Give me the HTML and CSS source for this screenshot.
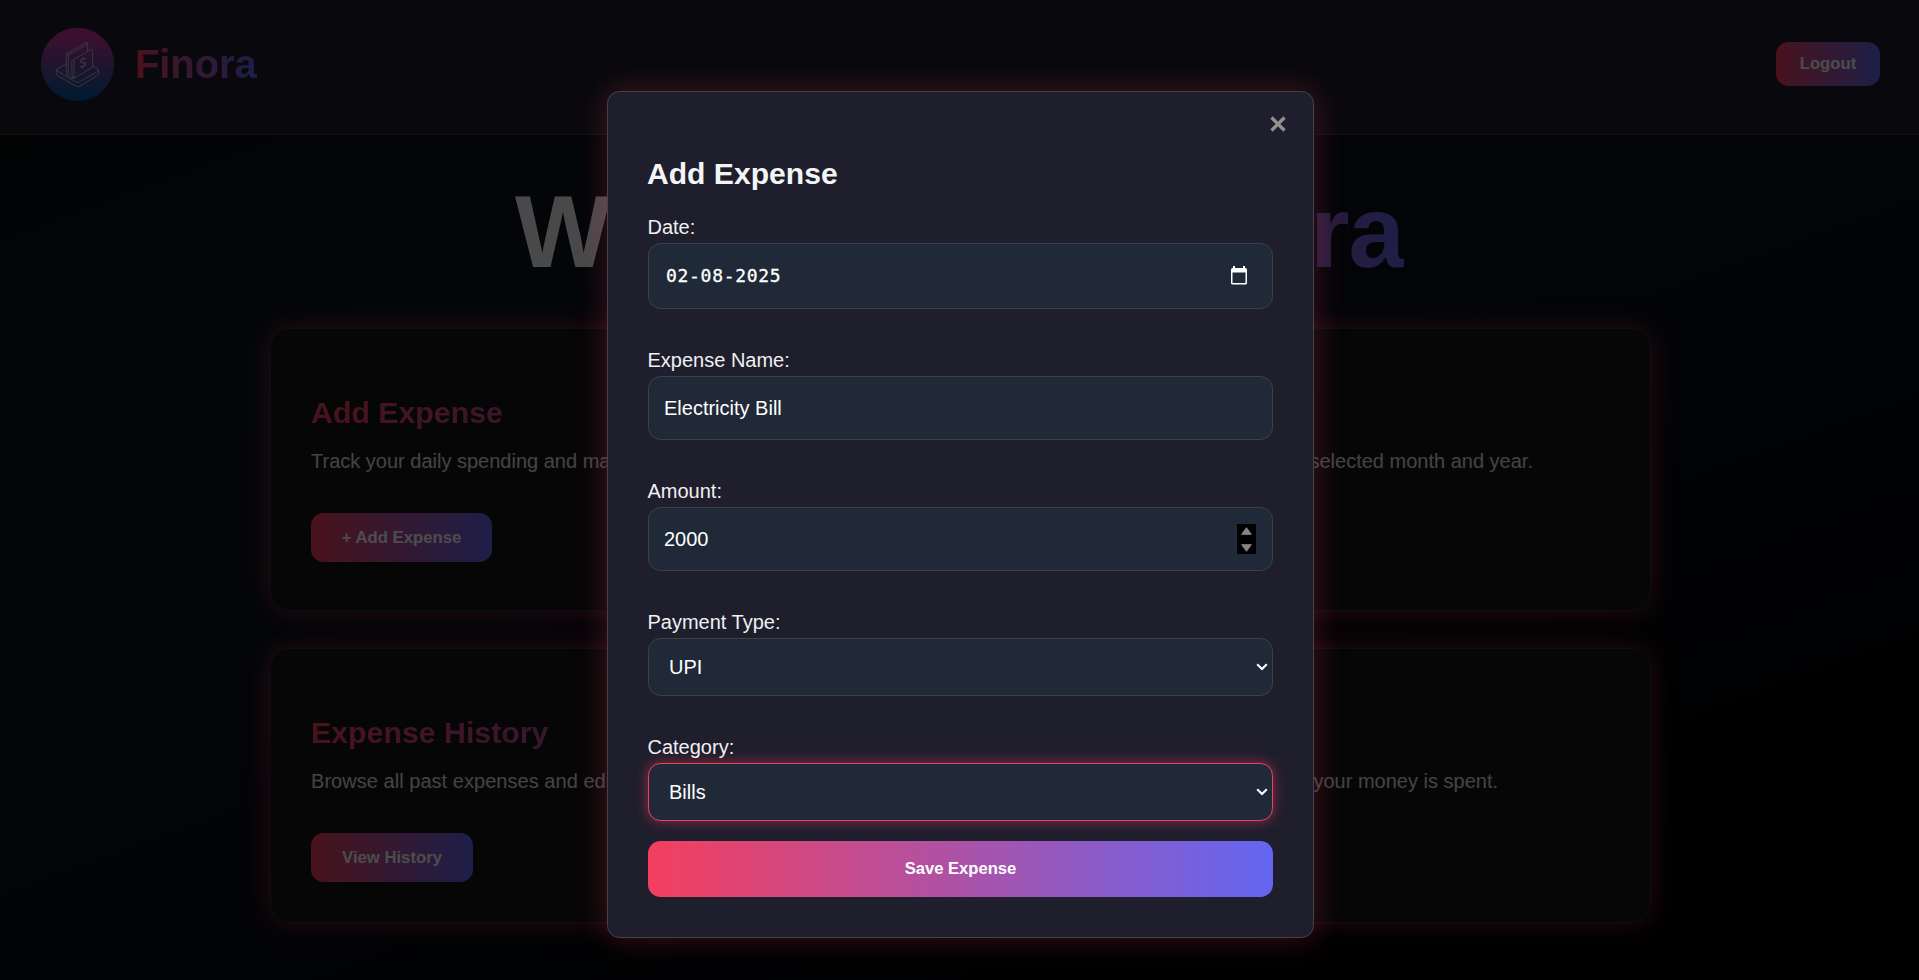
FILE: index.html
```html
<!DOCTYPE html>
<html lang="en">
<head>
<meta charset="utf-8">
<title>Finora</title>
<link rel="stylesheet" href="styles.css">
</head>
<body>
<header class="header">
  <div class="brand">
    <svg class="logo" viewBox="120 81 225 225" fill="none">
      <defs><linearGradient id="lg" x1="0" y1="0" x2="0" y2="1"><stop offset="0.1" stop-color="#cc359f"/><stop offset="0.95" stop-color="#04579f"/></linearGradient></defs>
      <circle cx="232.5" cy="193" r="110" fill="url(#lg)"/>
      <g stroke="#e0dcd8" stroke-opacity=".8" stroke-width="2.800" stroke-linejoin="round" stroke-linecap="round">
        <path d="M198 192 L172 207 Q168 210 172 213 L228 246 Q233 249 238 246 L293 214 Q298 210 293 207 L279 199"/>
        <path d="M169 211 V220 Q169 224 173 227 L228 259 Q233 262 238 259 L292 227 Q296 224 296 220 V211"/>
        <path d="M199 161 L257 128 Q263 125 263 131 V152 M199 161 V218 Q200 232 210 234 Q216 236 222 232"/>
        <path d="M205 165 L261 133 M205 165 V216 Q206 226 212 229"/>
        <path d="M216 182 L272 149 Q278 146 278 153 V198 Q278 202 274 204 L222 235 Q216 235 216 226 Z M222 183 V234"/>
        <path stroke-width="4" d="M256 177 Q248 174 243 181 Q240 188 249 188 Q258 188 256 194 Q250 202 242 199 M251 173 V176 M248 200 V203"/>
      </g>
    </svg>
    <span class="brand-name">Finora</span>
  </div>
  <button class="btn btn-logout">Logout</button>
</header>
<main class="main">
  <h1 class="hero">Welcome to <span class="grad">Finora</span></h1>
  <div class="grid">
    <section class="card"><h3 class="card-title">Add Expense</h3><p class="card-text">Track your daily spending and manage your budget.</p><button class="btn btn-add">+ Add Expense</button></section>
    <section class="card"><h3 class="card-title">Summary</h3><p class="card-text"><span class="lead lead-a">View your total expenses for a</span>selected month and year.</p></section>
    <section class="card"><h3 class="card-title">Expense History</h3><p class="card-text card-text-history">Browse all past expenses and edit or delete them.</p><button class="btn btn-history">View History</button></section>
    <section class="card"><h3 class="card-title">Charts</h3><p class="card-text"><span class="lead lead-b">Visual breakdown of where</span>your money is spent.</p></section>
  </div>
</main>
<div class="overlay">
  <form class="modal">
    <svg class="close" viewBox="0 0 16 16" fill="none" stroke="#919191" stroke-width="3.200"><path d="M1.500 1.500 L14.500 14.500 M14.500 1.500 L1.500 14.500"/></svg>
    <h2 class="modal-title">Add Expense</h2>
    <div class="field"><span class="label">Date:</span>
      <div class="input input-date"><span class="date">02-08-2025</span>
        <svg class="cal" viewBox="0 0 16 19"><path fill="#fff" fill-rule="evenodd" d="M2 0h2v2h8V0h2v2h.5Q16 2 16 3.500V17Q16 18.500 14.500 18.500H1.500Q0 18.500 0 17V3.500Q0 2 1.500 2H2zM1.500 6.500V17H14.500V6.500z"/></svg></div></div>
    <div class="field"><span class="label">Expense Name:</span><div class="input">Electricity Bill</div></div>
    <div class="field"><span class="label">Amount:</span>
      <div class="input input-number"><span>2000</span>
        <svg class="spin" viewBox="0 0 19 30"><rect width="19" height="30" fill="#000"/><path fill="#858585" stroke="#858585" stroke-linejoin="round" d="M9.500 3.700L14.300 10.300H4.700zM9.500 27.300L14.300 20.700H4.700z"/></svg></div></div>
    <div class="field"><span class="label">Payment Type:</span>
      <div class="input select">UPI<svg class="chev" viewBox="0 0 12 8"><path d="M1.200 1.200L6 6L10.800 1.200" fill="none" stroke="#fff" stroke-width="2.100"/></svg></div></div>
    <div class="field field-last"><span class="label">Category:</span>
      <div class="input select focused">Bills<svg class="chev" viewBox="0 0 12 8"><path d="M1.200 1.200L6 6L10.800 1.200" fill="none" stroke="#fff" stroke-width="2.100"/></svg></div></div>
    <button class="btn btn-save" type="button">Save Expense</button>
  </form>
</div>
</body>
</html>
```
FILE: styles.css
```css
* { box-sizing: border-box; }
body {
  margin: 0;
  height: 980px;
  overflow: hidden;
  font-family: "Liberation Sans", Arial, sans-serif;
  font-size: 20px;
  color: #f3f4f6;
  background: linear-gradient(160deg, #040704 0%, #0b1420 28%, #0a0f1c 50%, #000 88%);
}
h1, h2, h3, p { margin: 0; }
.header {
  display: flex;
  justify-content: space-between;
  height: 135px;
  padding: 27px 39px 32px 40px;
  background: #1e1e2d;
  border-bottom: 1px solid #37373d;
}
.brand { display: flex; align-items: center; gap: 20px; height: 75px; }
.logo { width: 75px; height: 75px; }
.brand-name { font-size: 40px; font-weight: 700; line-height: 46px; margin-bottom: 2px; letter-spacing: -.1px; }
.brand-name, .grad, .card-title {
  background: linear-gradient(to right, #f43f5e, #6366f1);
  -webkit-background-clip: text;
  background-clip: text;
  color: transparent;
}
.btn {
  display: block;
  padding: 0;
  border: 0;
  border-radius: 12.5px;
  font: 700 16.7px "Liberation Sans", Arial, sans-serif;
  color: #fff;
  background: linear-gradient(to right, #f43f5e, #6366f1);
}
.btn-logout { width: 104px; height: 44px; margin-top: 15px; }
.main { padding: 40px 268px 0 270px; }
.hero { font-size: 101.5px; line-height: 115px; letter-spacing: -1px; text-align: center; white-space: nowrap; margin-left: -2px; }
.grid { display: grid; grid-template-columns: 1fr 1fr; grid-template-rows: 283px 275px; gap: 37px 38px; margin-top: 38px; }
.card {
  padding: 67px 40px 0;
  border: 1px solid #2e302f;
  border-radius: 20px;
  background: rgba(24, 24, 23, .85);
  box-shadow: 0 0 25px rgba(244, 63, 94, .5);
}
.card-title { font-size: 30.3px; line-height: 34px; margin-bottom: 19px; }
.card-text { line-height: 24px; white-space: nowrap; color: #e2e2e2; }
.card-text-history { letter-spacing: .04px; }
.lead { display: inline-block; }
.lead-a { width: 289px; }
.lead-b { width: 293px; }
.btn-add, .btn-history { height: 49px; margin-top: 40px; }
.btn-add { width: 181px; }
.btn-history { width: 162px; }
.overlay {
  position: absolute;
  inset: 0;
  display: flex;
  justify-content: center;
  align-items: flex-start;
  padding: 91px 0 0 2px;
  background: rgba(0, 0, 0, .7);
}
.modal {
  position: relative;
  width: 707px;
  height: 847px;
  padding: 65px 40px 40px;
  border: 1px solid #444349;
  border-radius: 12.5px;
  background: #1f1e2d;
  box-shadow: 0 0 31px rgba(244, 63, 94, .25);
}
.close { position: absolute; right: 27.5px; top: 24px; width: 16px; height: 16px; }
.modal-title { font-size: 30.1px; line-height: 34px; margin: 0 0 24px -1px; }
.field { margin-bottom: 39px; }
.field-last { margin-bottom: 20px; }
.label { display: block; line-height: 24px; margin: 0 0 4px -.5px; color: #f0f0f2; }
.input {
  display: flex;
  align-items: center;
  justify-content: space-between;
  height: 64px;
  padding: 0 16px 0 15px;
  border: 1px solid #3d4046;
  border-radius: 12.5px;
  background: #1f2937;
  color: #fff;
}
.input-date { height: 66px; padding: 0 25px 1px 17px; }
.date { font: 18px "DejaVu Sans Mono", monospace; letter-spacing: .7px; -webkit-text-stroke: .3px #fff; }
.cal { width: 16px; height: 19px; }
.spin { width: 19px; height: 30px; }
.select { height: 58px; padding: 0 4px 0 20px; }
.chev { width: 12px; height: 8px; }
.focused { border-color: #f43f5e; box-shadow: 0 0 12.5px rgba(244, 63, 94, .5); }
.btn-save { width: 100%; height: 56px; font-size: 16.6px; }
```
